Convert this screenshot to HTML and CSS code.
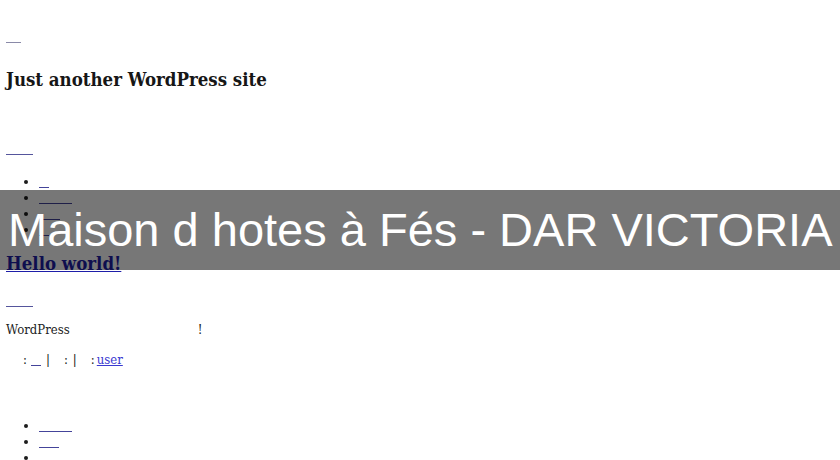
FILE: index.html
```html
<!DOCTYPE html>
<html lang="fr">
<head>
<meta charset="utf-8">
<title>Maison d hotes à Fés - DAR VICTORIA</title>
<link rel="stylesheet" href="styles.css">
</head>
<body>
<div class="page">
  <a class="u u1" href="#"></a>
  <p class="tagline">Just another WordPress site</p>
  <a class="u u2" href="#"></a>
  <ul class="menu top">
    <li><a class="blank w10" href="#"></a></li>
    <li><a class="blank w33" href="#"></a></li>
    <li><a class="blank w17 off4" href="#"></a></li>
    <li><a class="blank w10" href="#"></a></li>
  </ul>
  <h2 class="post-title"><a href="#">Hello world!</a></h2>
  <a class="u u3" href="#"></a>
  <p class="excerpt">WordPress<span class="bang">!</span></p>
  <p class="meta"><span class="c1">:</span><a class="blank w10" href="#"></a><span class="bar1">|</span><span class="c2">:</span><span class="bar2">|</span><span class="c3">:</span><a class="user" href="#">user</a></p>
  <ul class="menu bottom">
    <li><a class="blank w33" href="#"></a></li>
    <li><a class="blank w20" href="#"></a></li>
    <li><a class="blank w10" href="#"></a></li>
  </ul>
</div>
<div class="banner">Maison d hotes à Fés - DAR VICTORIA</div>
</body>
</html>
```
FILE: styles.css
```css
html, body {
  margin: 0;
  padding: 0;
  overflow: hidden;
  background: #ffffff;
}
body {
  width: 840px;
  height: 460px;
  position: relative;
  font-family: "DejaVu Serif Condensed", "DejaVu Serif", "Liberation Serif", serif;
  font-stretch: semi-condensed;
  color: #1c1c1c;
}
.page {
  padding: 0 6px;
}
.u {
  display: block;
  height: 1px;
  background: #55559c;
}
.u1 { width: 15px; margin-top: 42px; background: #8a8aa8; }
.u2 { width: 27px; margin-top: 62px; }
.u3 { width: 27px; margin-top: 30px; }

.tagline {
  margin: 25px 0 0;
  font-size: 18.5px;
  line-height: 24px;
  font-weight: bold;
  color: #161616;
}
.menu {
  margin: 0;
  padding-left: 33px;
  list-style: disc;
  font-size: 14px;
  line-height: 16px;
}
.menu.top { margin-top: 18px; }
.menu.bottom { margin-top: 49px; }
.blank {
  display: inline-block;
  height: 0;
  border-bottom: 1px solid #44449a;
  vertical-align: -2px;
}
.w10 { width: 10px; }
.w17 { width: 17px; }
.w20 { width: 20px; }
.w33 { width: 33px; }
.off4 { margin-left: 4px; }

.post-title {
  margin: 15px 0 0;
  font-size: 18.5px;
  line-height: 24px;
  font-weight: bold;
}
.post-title a {
  color: #1e1ea8;
  text-decoration: underline;
}
.excerpt {
  margin: 15px 0 0;
  font-size: 13px;
  line-height: 16px;
  color: #222;
}
.bang { margin-left: 128px; }
.meta {
  margin: 14px 0 0;
  padding-left: 17px;
  font-size: 13px;
  line-height: 16px;
  color: #222;
}
.meta .blank { margin-left: 4px; }
.bar1 { margin-left: 5px; color: #111; }
.c2 { margin-left: 14px; }
.bar2 { margin-left: 5px; color: #111; }
.c3 { margin-left: 14px; }
.user {
  margin-left: 2px;
  color: #3a3ad0;
  text-decoration: underline;
}

.banner {
  position: absolute;
  top: 190px;
  left: 0;
  width: 840px;
  height: 80px;
  box-sizing: border-box;
  padding: 13px 0 0 8px;
  background: rgba(0, 0, 0, 0.533);
  color: #ffffff;
  font-family: "Liberation Sans", Arial, sans-serif;
  font-stretch: normal;
  font-size: 47px;
  line-height: 54px;
  white-space: nowrap;
}
```
